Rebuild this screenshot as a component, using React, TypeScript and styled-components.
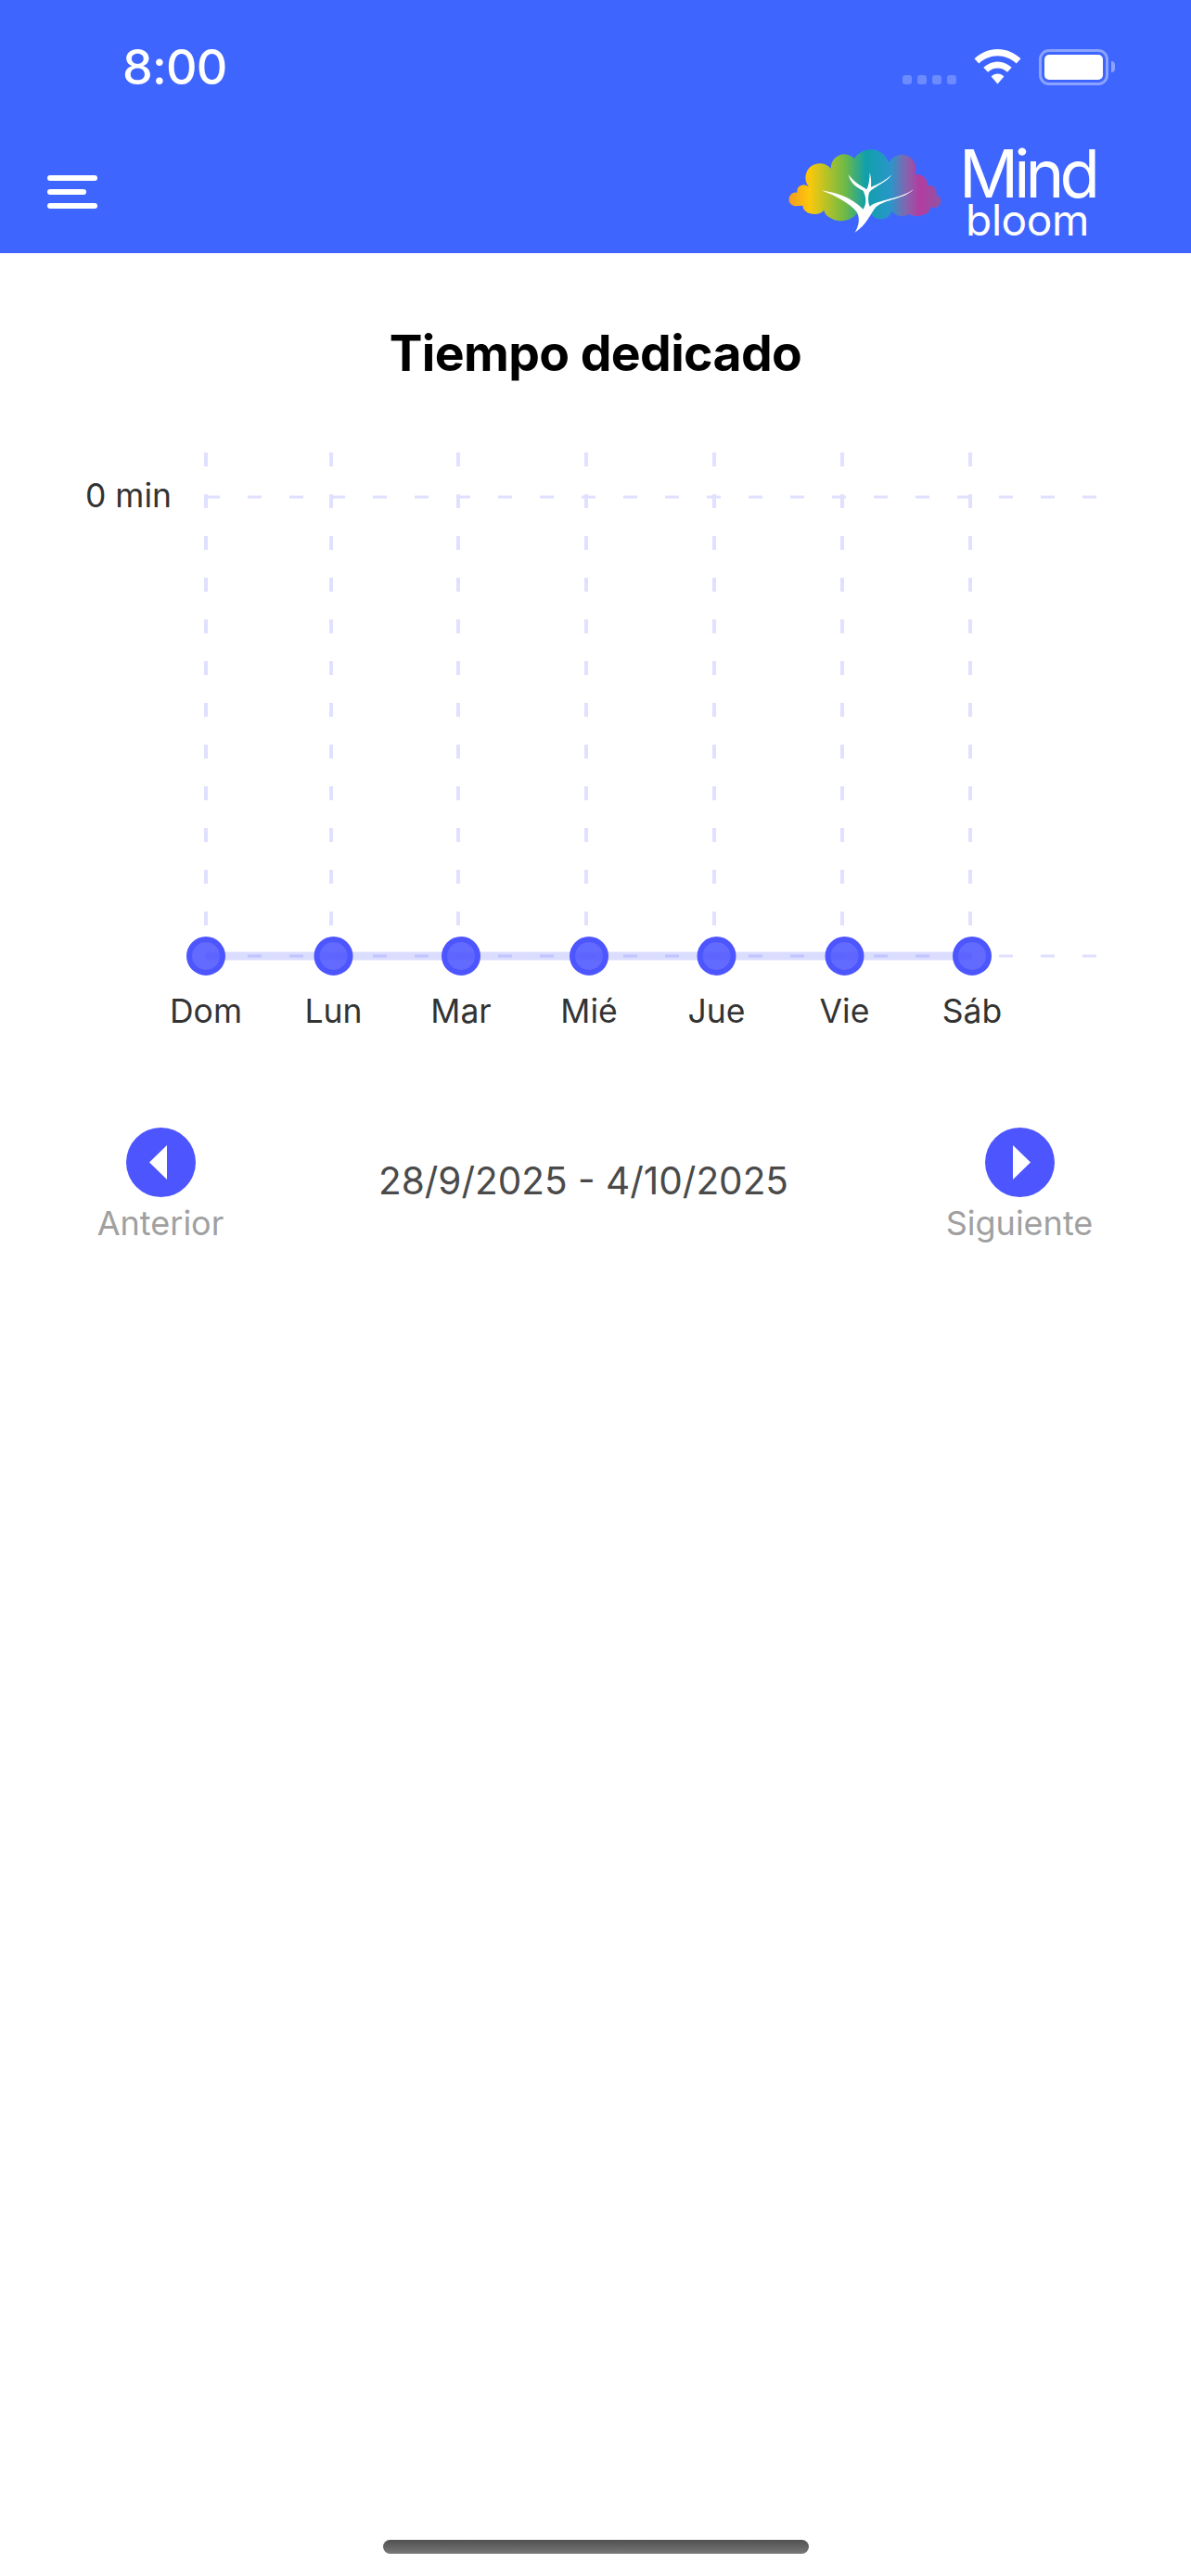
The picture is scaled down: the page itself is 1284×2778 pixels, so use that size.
import styled, { createGlobalStyle } from "styled-components";

const BLUE = "#3f65ff";
const ACCENT = "#4d55ff";
const GRID = "#e0e0ff";

const DAYS = ["Dom", "Lun", "Mar", "Mié", "Jue", "Vie", "Sáb"];
const GRID_X = [222, 357, 494, 632, 770, 908, 1046];
const DOT_X = [222, 359.5, 497, 635, 772.5, 910.5, 1048];

const GlobalStyle = createGlobalStyle`
  html, body {
    margin: 0;
    padding: 0;
    background: #fff;
    font-family: Inter, "Liberation Sans", sans-serif;
  }
`;

const Page = styled.div`
  width: 1284px;
  height: 2778px;
  display: flex;
  flex-direction: column;
  overflow: hidden;
  background: #fff;
`;

const Header = styled.header`
  height: 273px;
  box-sizing: border-box;
  background: ${BLUE};
  display: flex;
  flex-direction: column;
`;

const StatusBar = styled.div`
  height: 161px;
  box-sizing: border-box;
  padding: 37px 89px 0 132px;
  display: flex;
  align-items: flex-start;
  justify-content: space-between;
`;

const Clock = styled.span`
  font-size: 52px;
  font-weight: 500;
  line-height: 72px;
  letter-spacing: -0.8px;
  color: #fff;
`;

const StatusIcons = styled.div`
  display: flex;
  align-items: flex-start;
  margin-top: 16px;
`;

const Signal = styled.div`
  display: flex;
  gap: 6px;
  margin: 28px 19px 0 0;
`;

const SignalDot = styled.i`
  width: 10px;
  height: 10px;
  border-radius: 3px;
  background: #6d8bff;
`;

const Battery = styled.div`
  width: 75px;
  height: 39px;
  box-sizing: border-box;
  margin-left: 19px;
  border: 3px solid #8ba3ff;
  border-radius: 11px;
  padding: 3px;
  position: relative;

  &::after {
    content: "";
    position: absolute;
    right: -10px;
    top: 10px;
    width: 4px;
    height: 12px;
    border-radius: 0 6px 6px 0;
    background: #8ba3ff;
  }
`;

const BatteryFill = styled.div`
  height: 100%;
  border-radius: 5px;
  background: #fff;
`;

const NavBar = styled.div`
  flex: 1;
  box-sizing: border-box;
  padding: 0 103px 0 51px;
  display: flex;
  align-items: flex-start;
  justify-content: space-between;
`;

const MenuButton = styled.div`
  margin-top: 28px;
  display: flex;
  flex-direction: column;
  gap: 9px;
  width: 54px;
`;

const MenuBar = styled.i<{ $short?: boolean }>`
  display: block;
  height: 6px;
  border-radius: 3px;
  background: #fff;
  width: ${(p) => (p.$short ? "42px" : "54px")};
`;

const Logo = styled.div`
  display: flex;
  align-items: flex-start;
  gap: 4px;
`;

const LogoMark = styled.svg`
  width: 190px;
  height: 105px;
  margin-top: -6px;
`;

const Wordmark = styled.div`
  width: 147px;
  margin-top: -2px;
  display: flex;
  flex-direction: column;
  align-items: center;
  gap: 1px;
  color: #fff;
  font-weight: 400;
`;

const WordTop = styled.span`
  font-size: 71px;
  line-height: 56px;
  height: 56px;
  letter-spacing: -5px;
`;

const WordBottom = styled.span`
  font-size: 46px;
  line-height: 42px;
  height: 42px;
  letter-spacing: -0.4px;
`;

const Content = styled.main`
  flex: 1;
  display: flex;
  flex-direction: column;
`;

const Title = styled.h1`
  margin: 78px 0 0;
  height: 60px;
  font-size: 53.5px;
  line-height: 60px;
  font-weight: 700;
  letter-spacing: -0.6px;
  text-align: center;
  color: #000;
`;

const ChartSvg = styled.svg`
  display: block;
  width: 1284px;
  height: 770px;
`;

const AxisText = styled.text`
  font-family: Inter, "Liberation Sans", sans-serif;
  font-size: 35.5px;
  fill: #333;
`;

const Pager = styled.div`
  margin-top: 35px;
  padding: 0 106px 0 105px;
  display: grid;
  grid-template-columns: 136px 1fr 158px;
  align-items: start;
`;

const PagerItem = styled.div`
  display: flex;
  flex-direction: column;
  align-items: center;
  gap: 6px;
`;

const RoundButton = styled.div`
  width: 75px;
  height: 75px;
  border-radius: 50%;
  background: ${ACCENT};
  display: flex;
  align-items: center;
  justify-content: center;
`;

const PagerLabel = styled.span`
  font-size: 36px;
  line-height: 44px;
  color: #a0a0a0;
  white-space: nowrap;
`;

const DateRange = styled.div`
  text-align: center;
  font-size: 40.5px;
  line-height: 48px;
  margin-top: 34px;
  padding-right: 3px;
  color: #4a4a4a;
`;

const HomeBar = styled.div`
  width: 459px;
  height: 15px;
  margin: auto auto 24px;
  border-radius: 8px;
  background: linear-gradient(#505050, #787878);
`;

const WifiIcon = () => (
  <svg width="51" height="38" viewBox="0 0 51 38">
    <path fill="#fff" d="M25.5 0C16 0 7.4 3.7 0.5 10.3L5.3 15.5C11 10.3 18 7.3 25.5 7.3S40 10.3 45.7 15.5L50.5 10.3C43.6 3.7 35 0 25.5 0Z" />
    <path fill="#fff" d="M25.5 13.5C19.8 13.5 14.5 15.8 10.3 19.8L15 24.8C18 22 21.5 20.5 25.5 20.5S33 22 36 24.8L40.7 19.8C36.5 15.8 31.2 13.5 25.5 13.5Z" />
    <path fill="#fff" d="M25.5 26.5C23 26.5 20.4 27.5 18.6 29.4L25.5 37.5L32.4 29.4C30.6 27.5 28 26.5 25.5 26.5Z" />
  </svg>
);

const CloudLogo = () => (
  <LogoMark viewBox="0 0 570 315">
    <defs>
      <linearGradient id="cloudFill" gradientUnits="userSpaceOnUse" x1="28" y1="0" x2="532" y2="0">
        <stop offset="0" stopColor="#f39b20" />
        <stop offset="0.14" stopColor="#fbc80b" />
        <stop offset="0.25" stopColor="#b5c228" />
        <stop offset="0.37" stopColor="#6db947" />
        <stop offset="0.5" stopColor="#10a0ab" />
        <stop offset="0.66" stopColor="#2a96c8" />
        <stop offset="0.76" stopColor="#8564ae" />
        <stop offset="0.85" stopColor="#b33c9f" />
        <stop offset="1" stopColor="#8b57a6" />
      </linearGradient>
    </defs>
    <path
      fill="url(#cloudFill)"
      d="M50 202A22 22 0 0 1 58 158A22 22 0 0 1 96 140A46 46 0 0 1 167 80A44 44 0 0 1 243 48A62 62 0 0 1 355 62A44 44 0 0 1 438 100A34 34 0 0 1 480 135A24 24 0 0 1 508 165A22 22 0 0 1 510 206L490 206A45 30 0 0 1 418 228A35 30 0 0 1 365 218A38 38 0 0 1 298 228L250 228A56 40 0 0 1 145 215A38 30 0 0 1 76 200Z"
    />
    <path
      fill="#fff"
      d="M245 287C258 265 262 245 252 222C225 190 185 170 137 151C190 160 230 172 272 212C285 190 280 170 272 152C245 140 230 125 224 100C240 122 262 135 283 148C290 135 293 115 293 93C298 110 298 125 297 140C320 132 345 118 365 100C348 125 305 140 291 158C286 175 288 190 293 203C320 180 390 180 435 147C405 180 345 178 313 205C295 225 285 262 245 287Z"
    />
  </LogoMark>
);

const Chart = () => (
  <ChartSvg viewBox="0 411 1284 770">
    <g stroke={GRID} fill="none">
      {GRID_X.map((x) => (
        <line key={x} x1={x} x2={x} y1={488} y2={1031} strokeWidth={4} strokeDasharray="15 30" />
      ))}
      <line x1={222} x2={1182} y1={536} y2={536} strokeWidth={3} strokeDasharray="15 30" />
      <line x1={222} x2={1182} y1={1031} y2={1031} strokeWidth={3} strokeDasharray="15 30" />
    </g>
    <line x1={222} x2={1048} y1={1031} y2={1031} stroke={ACCENT} strokeOpacity={0.2} strokeWidth={9} />
    {DOT_X.map((x) => (
      <circle key={x} cx={x} cy={1031} r={18} fill={ACCENT} fillOpacity={0.88} stroke={ACCENT} strokeWidth={6} />
    ))}
    <AxisText x={185} y={547} textAnchor="end">0 min</AxisText>
    {DAYS.map((day, i) => (
      <AxisText key={day} x={DOT_X[i]} y={1103} textAnchor="middle">{day}</AxisText>
    ))}
  </ChartSvg>
);

const App = () => (
  <Page>
    <GlobalStyle />
    <Header>
      <StatusBar>
        <Clock>8:00</Clock>
        <StatusIcons>
          <Signal>
            <SignalDot />
            <SignalDot />
            <SignalDot />
            <SignalDot />
          </Signal>
          <WifiIcon />
          <Battery>
            <BatteryFill />
          </Battery>
        </StatusIcons>
      </StatusBar>
      <NavBar>
        <MenuButton>
          <MenuBar />
          <MenuBar $short />
          <MenuBar />
        </MenuButton>
        <Logo>
          <CloudLogo />
          <Wordmark>
            <WordTop>Mind</WordTop>
            <WordBottom>bloom</WordBottom>
          </Wordmark>
        </Logo>
      </NavBar>
    </Header>
    <Content>
      <Title>Tiempo dedicado</Title>
      <Chart />
      <Pager>
        <PagerItem>
          <RoundButton>
            <svg width="19" height="37" viewBox="0 0 19 37" style={{ marginLeft: -5 }}>
              <path fill="#fff" d="M19 0V37L0 18.5Z" />
            </svg>
          </RoundButton>
          <PagerLabel>Anterior</PagerLabel>
        </PagerItem>
        <DateRange>28/9/2025 - 4/10/2025</DateRange>
        <PagerItem>
          <RoundButton>
            <svg width="19" height="37" viewBox="0 0 19 37" style={{ marginLeft: 5 }}>
              <path fill="#fff" d="M0 0V37L19 18.5Z" />
            </svg>
          </RoundButton>
          <PagerLabel>Siguiente</PagerLabel>
        </PagerItem>
      </Pager>
      <HomeBar />
    </Content>
  </Page>
);

export default App;
